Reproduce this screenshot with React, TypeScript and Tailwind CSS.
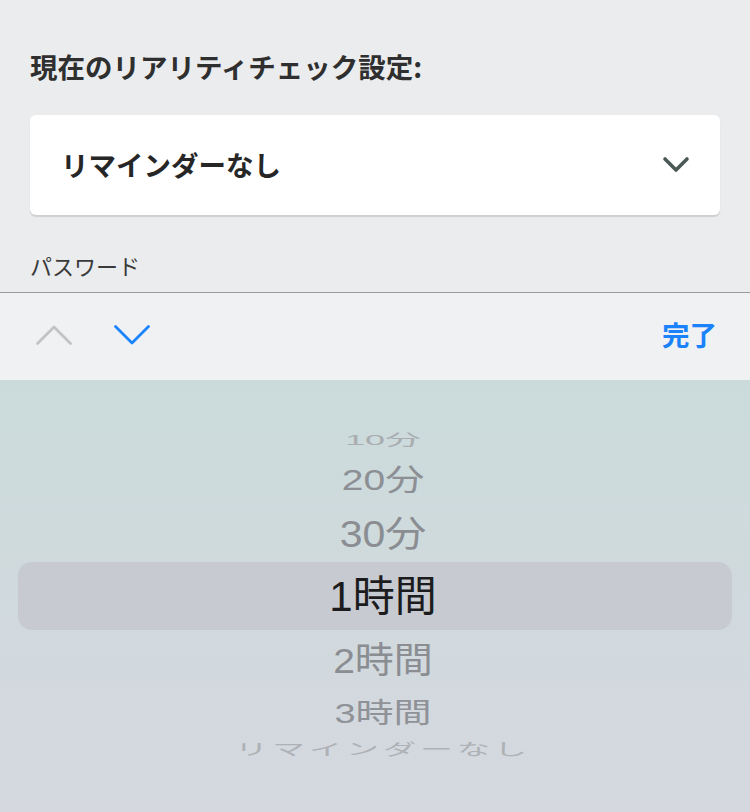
import React from 'react';

interface PickerRow {
  label: string;
  rowClass: string;
  textClass: string;
}

const rows: PickerRow[] = [
  { label: '10分', rowClass: 'h-[24px]', textClass: 'text-[36px] text-[#a9adb1] scale-y-[0.42]' },
  { label: '20分', rowClass: 'h-[54px]', textClass: 'text-[39px] text-[#8c8f94] scale-y-[0.76]' },
  { label: '30分', rowClass: 'h-[56px]', textClass: 'text-[41px] text-[#8a8d92] scale-y-[0.9]' },
];

const rowsAfter: PickerRow[] = [
  { label: '2時間', rowClass: 'h-[60px]', textClass: 'text-[39px] text-[#8a8d92] scale-y-[0.92]' },
  { label: '3時間', rowClass: 'h-[46px]', textClass: 'text-[38px] text-[#8f9297] scale-y-[0.74]' },
  { label: 'リマインダーなし', rowClass: 'h-[26px]', textClass: 'text-[33px] tracking-[4px] text-[#aeb1b6] scale-y-[0.48]' },
];

function Row({ row }: { row: PickerRow }) {
  return (
    <div className={`flex items-center justify-center pl-[16px] ${row.rowClass}`}>
      <span className={`leading-none ${row.textClass}`}>{row.label}</span>
    </div>
  );
}

export default function App() {
  return (
    <div className="w-[750px] h-[812px] flex flex-col bg-[#ebecee] font-['Noto_Sans_CJK_JP',sans-serif] overflow-hidden">
      {/* form area */}
      <div className="px-[30px] pt-[48px]">
        <h2 className="text-[27.5px] leading-[36px] font-bold text-[#2f2f2f]">現在のリアリティチェック設定:</h2>
        <div className="mt-[31px] h-[100px] bg-white rounded-[6px] shadow-[0_2px_1px_rgba(0,0,0,0.12)] flex items-center justify-between pl-[31px] pr-[30px]">
          <span className="text-[27.5px] font-bold text-[#262626]">リマインダーなし</span>
          <svg width="28" height="18" viewBox="0 0 28 18" fill="none">
            <path d="M3 3 L14 14 L25 3" stroke="#4b5957" strokeWidth="3.6" strokeLinecap="round" strokeLinejoin="round" />
          </svg>
        </div>
        <div className="mt-[36px] text-[22px] leading-[28px] text-[#3a3a3a]">パスワード</div>
      </div>

      {/* keyboard toolbar */}
      <div className="mt-[13px] h-[88px] border-t border-[#9b9b9b] bg-[#f0f1f3] flex items-center px-[35px] pb-[3px]">
        <svg width="38" height="22" viewBox="0 0 38 22" fill="none">
          <path d="M2.5 19.5 L19 3 L35.5 19.5" stroke="#c2c3c5" strokeWidth="2.8" strokeLinecap="round" strokeLinejoin="round" />
        </svg>
        <svg className="ml-[40px]" width="38" height="22" viewBox="0 0 38 22" fill="none">
          <path d="M2.5 2.5 L19 19 L35.5 2.5" stroke="#1a84ff" strokeWidth="2.8" strokeLinecap="round" strokeLinejoin="round" />
        </svg>
        <span className="ml-auto mr-[-2px] text-[27.5px] font-bold text-[#1a82fb]">完了</span>
      </div>

      {/* picker wheel */}
      <div className="flex-1 bg-linear-to-b from-[#cbdbdb] to-[#d5d8df] pt-[48px] font-['Liberation_Sans','Noto_Sans_CJK_JP',sans-serif]">
        {rows.map((r) => (
          <Row key={r.label} row={r} />
        ))}
        <div className="mx-[18px] h-[68px] rounded-[14px] bg-[#c7cad0] flex items-center justify-center pl-[16px]">
          <span className="text-[42px] leading-none text-[#1c1c1e] pt-[2px]">1時間</span>
        </div>
        {rowsAfter.map((r) => (
          <Row key={r.label} row={r} />
        ))}
      </div>
    </div>
  );
}
